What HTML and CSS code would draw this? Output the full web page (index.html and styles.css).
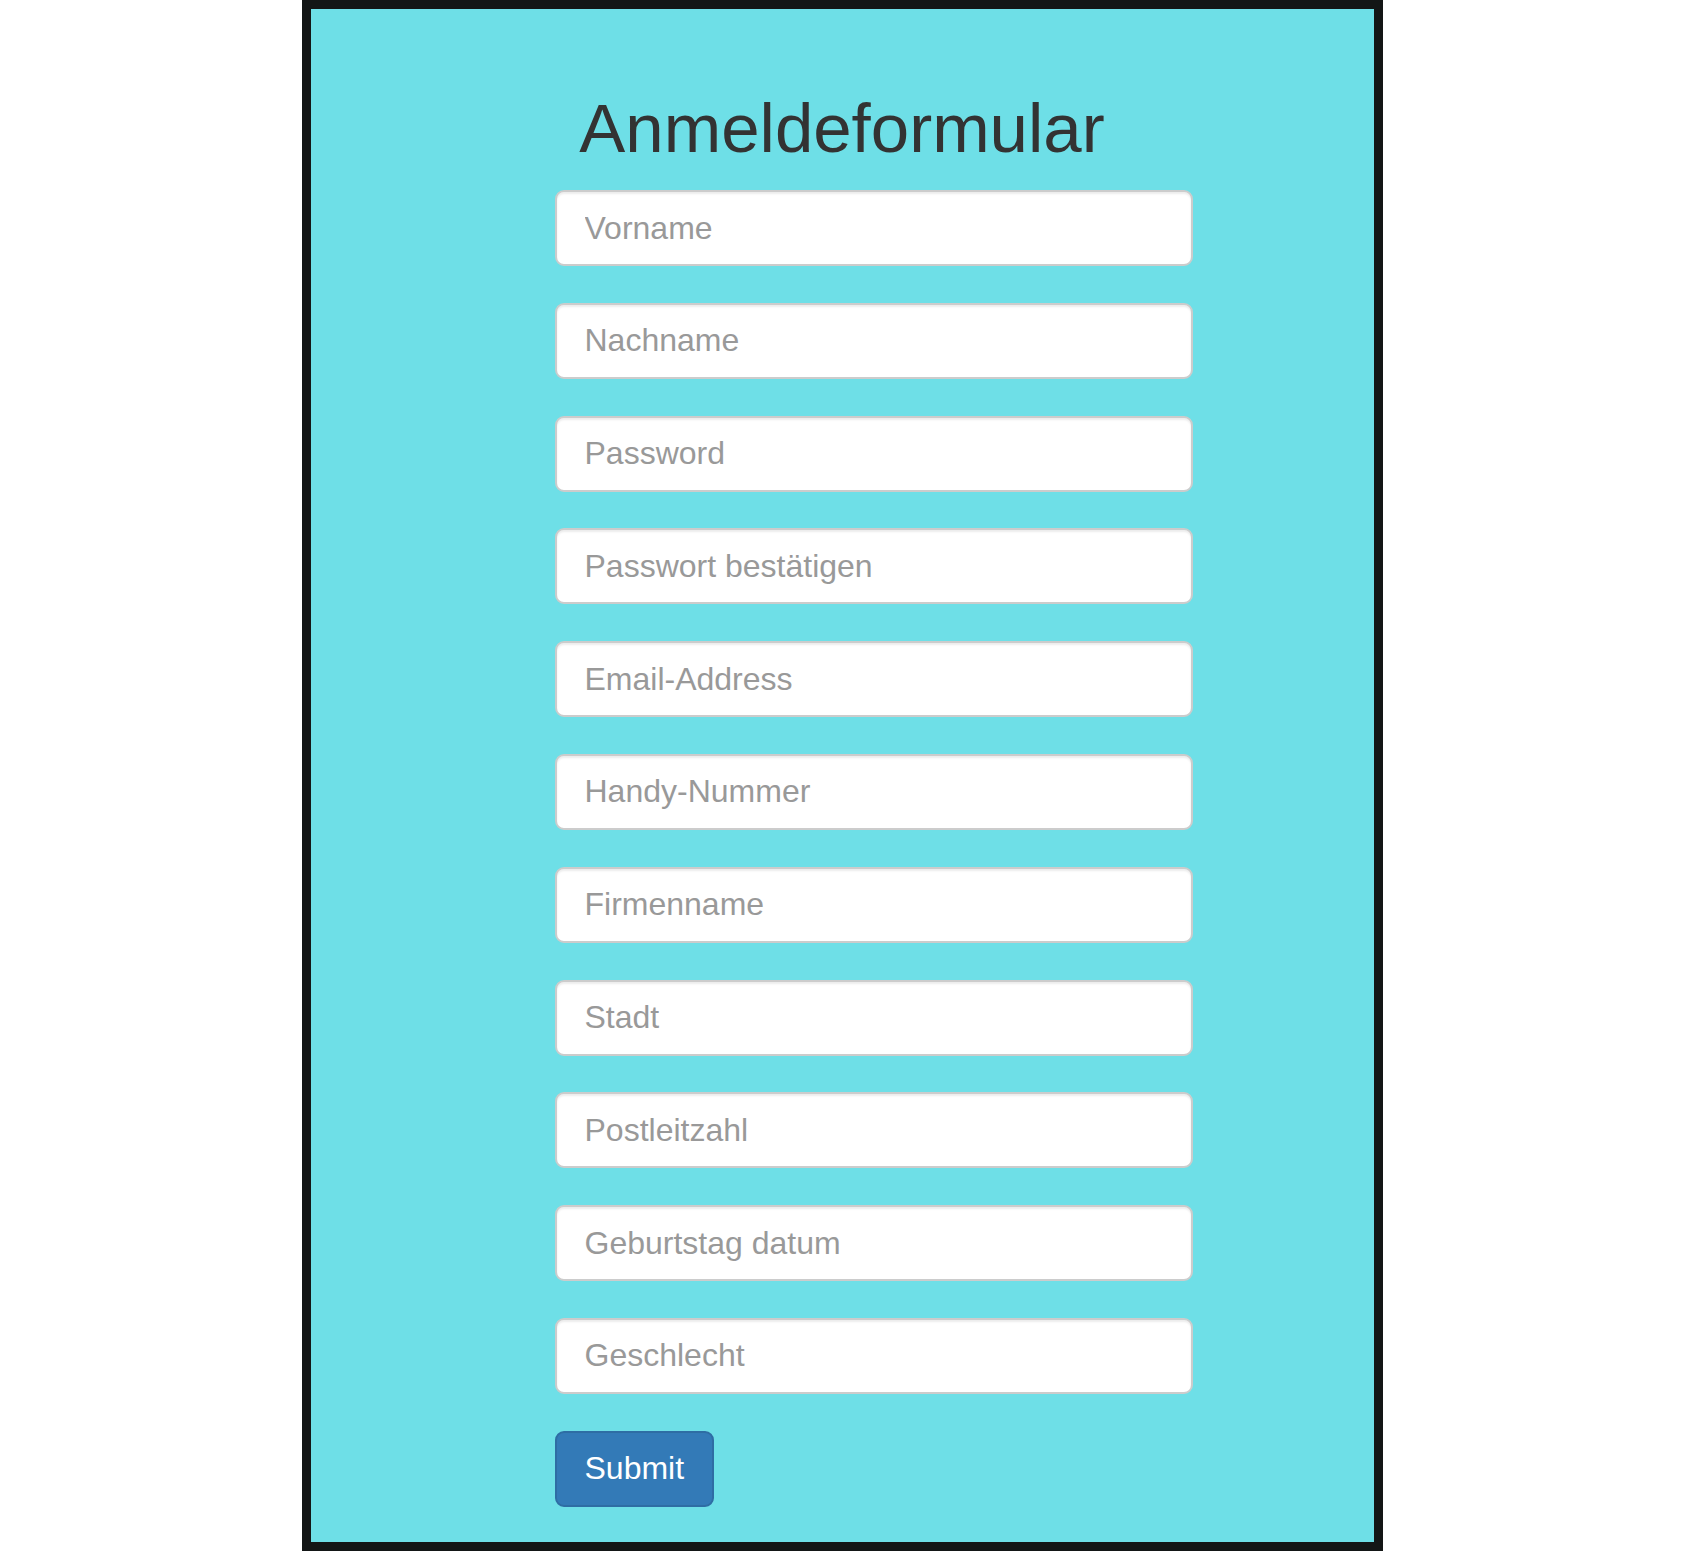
FILE: index.html
```html
<!DOCTYPE html>
<html lang="de">
<head>
<meta charset="utf-8">
<title>Anmeldeformular</title>
<link rel="stylesheet" href="styles.css">
</head>
<body>
<div class="frame">
  <h1 class="title">Anmeldeformular</h1>
  <form class="form">
    <input class="field" type="text" placeholder="Vorname">
    <input class="field" type="text" placeholder="Nachname">
    <input class="field" type="password" placeholder="Password">
    <input class="field" type="password" placeholder="Passwort bestätigen">
    <input class="field" type="text" placeholder="Email-Address">
    <input class="field" type="text" placeholder="Handy-Nummer">
    <input class="field" type="text" placeholder="Firmenname">
    <input class="field" type="text" placeholder="Stadt">
    <input class="field" type="text" placeholder="Postleitzahl">
    <input class="field" type="text" placeholder="Geburtstag datum">
    <input class="field" type="text" placeholder="Geschlecht">
    <button class="submit" type="button">Submit</button>
  </form>
</div>
</body>
</html>
```
FILE: styles.css
```css
html, body {
  margin: 0;
  padding: 0;
  background: #ffffff;
}

body {
  font-family: "Liberation Sans", Arial, sans-serif;
}

.frame {
  box-sizing: border-box;
  width: 1081px;
  height: 1551px;
  margin: 0 auto;
  border: 9px solid #131616;
  background: #6edfe7;
  padding-top: 80px;
}

.title {
  margin: 0;
  text-align: center;
  font-family: "Liberation Sans", Arial, sans-serif;
  font-weight: normal;
  font-size: 69px;
  line-height: 80px;
  color: #333333;
}

.form {
  display: flex;
  flex-direction: column;
  align-items: flex-start;
  margin-top: 21px;
  margin-left: 244px;
  width: 638px;
}

.field {
  box-sizing: border-box;
  width: 638px;
  height: 76px;
  margin: 0 0 36.8px 0;
  padding: 0 28px;
  border: 2px solid #cccccc;
  border-radius: 9px;
  background: #ffffff;
  box-shadow: inset 0 2px 2px rgba(0, 0, 0, 0.075);
  font-family: "Liberation Sans", Arial, sans-serif;
  font-size: 32px;
  color: #555555;
  outline: none;
}

.field::placeholder {
  color: #999999;
  opacity: 1;
}

.field:last-of-type {
  margin-bottom: 37px;
}

.submit {
  box-sizing: border-box;
  width: 159px;
  height: 76px;
  padding: 0 28px;
  border: 2px solid #2e6da4;
  border-radius: 9px;
  background: #337ab7;
  color: #ffffff;
  font-family: "Liberation Sans", Arial, sans-serif;
  font-size: 32px;
  cursor: pointer;
}
```
